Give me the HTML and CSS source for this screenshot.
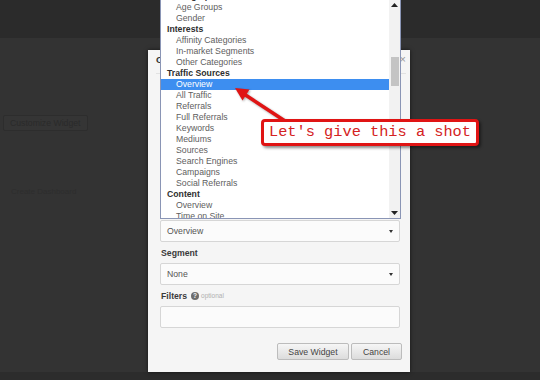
FILE: index.html
```html
<!DOCTYPE html>
<html lang="en">
<head>
    <meta charset="UTF-8">
    <title>Customize Widget</title>
    <link rel="stylesheet" href="styles.css">
</head>
<body>
    <div class="page">
        <div class="topbar"></div>
        <div class="content">
            <div class="ghost-btn">Customize Widget</div>
            <div class="ghost-link">Create Dashboard</div>
        </div>
    </div>

    <div class="modal">
        <div class="modal-head">
            <span class="modal-title">Customize Widget</span>
            <span class="close">&times;</span>
        </div>
        <!-- fields hidden under the open list -->
        <div class="covered"></div>
        <div class="field">
            <div class="control">Overview <span class="caret"></span></div>
        </div>
        <div class="field">
            <div class="label">Segment</div>
            <div class="control">None <span class="caret"></span></div>
        </div>
        <div class="field">
            <div class="label">Filters <span class="help">?</span> <span class="optional">optional</span></div>
            <div class="control"></div>
        </div>
        <div class="actions">
            <button class="btn btn-save">Save Widget</button>
            <button class="btn btn-cancel">Cancel</button>
        </div>
    </div>

    <!-- open report list, popping up above its select -->
    <div class="dropdown">
        <ul class="options">
            <li class="group">Demographics</li>
            <li>Age Groups</li>
            <li>Gender</li>
            <li class="group">Interests</li>
            <li>Affinity Categories</li>
            <li>In-market Segments</li>
            <li>Other Categories</li>
            <li class="group">Traffic Sources</li>
            <li class="selected">Overview</li>
            <li>All Traffic</li>
            <li>Referrals</li>
            <li>Full Referrals</li>
            <li>Keywords</li>
            <li>Mediums</li>
            <li>Sources</li>
            <li>Search Engines</li>
            <li>Campaigns</li>
            <li>Social Referrals</li>
            <li class="group">Content</li>
            <li>Overview</li>
            <li>Time on Site</li>
        </ul>
        <div class="scrollbar">
            <div class="scroll-btn">
                <svg width="7" height="4" viewBox="0 0 7 4"><path d="M0 4 L3.5 0 L7 4 Z" fill="#222"/></svg>
            </div>
            <div class="track"><div class="thumb"></div></div>
            <div class="scroll-btn">
                <svg width="7" height="4" viewBox="0 0 7 4"><path d="M0 0 L3.5 4 L7 0 Z" fill="#222"/></svg>
            </div>
        </div>
    </div>

    <svg class="pointer" width="540" height="380" viewBox="0 0 540 380">
        <line x1="285" y1="121" x2="244" y2="94" stroke="#e01414" stroke-width="3.5" stroke-linecap="round"/>
        <polygon points="235,88 249.5,89.5 242.5,100.5" fill="#e01414"/>
    </svg>
    <div class="callout">Let's give this a shot</div>
</body>
</html>
```

FILE: styles.css
```css
body {
    margin: 0;
    width: 540px;
    height: 380px;
    overflow: hidden;
    background-color: #333;
    font-family: "Liberation Sans", Arial, sans-serif;
    position: relative;
}
.page {
    height: 380px;
    display: flex;
    flex-direction: column;
}
.topbar {
    height: 38px;
    background-color: #2b2b2b;
}
.content {
    flex: 1;
    padding: 74px 0 0 3px;
    border-bottom: 8px solid #2c2c2c;
}
.ghost-btn {
    display: inline-block;
    padding: 2px 6px;
    font-size: 8.7px;
    line-height: 10px;
    color: #2a2a2a;
    background-color: #353535;
    border: 1px solid #2d2d2d;
    border-radius: 2px;
}
.ghost-link {
    margin: 56px 0 0 8px;
    font-size: 8px;
    color: #2d2d2d;
}

/* modal */
.modal {
    position: absolute;
    left: 148px;
    top: 50px;
    width: 240px;
    height: 310px;
    padding: 0 10px 12px 12px;
    background-color: #f5f5f5;
    box-shadow: 0 0 4px rgba(0, 0, 0, 0.6);
    display: flex;
    flex-direction: column;
}
.modal-head {
    height: 19px;
    padding: 4px 0 0 0;
    margin: 0 -6px 0 -4px;
    border-bottom: 1px solid #e2e2e2;
    display: flex;
    justify-content: space-between;
    align-items: flex-start;
}
.modal-title {
    font-size: 9.5px;
    font-weight: bold;
    color: #333;
    line-height: 11px;
}
.close {
    font-size: 11px;
    line-height: 11px;
    color: #999;
}
.covered {
    height: 150px;
}
.label {
    margin: 5px 0 4px 1px;
    height: 12px;
    font-size: 8.7px;
    font-weight: bold;
    line-height: 12px;
    color: #3a3a3a;
    display: flex;
    align-items: center;
    gap: 2px;
}
.help {
    width: 8px;
    height: 8px;
    border-radius: 50%;
    background-color: #6d6d6d;
    color: #f5f5f5;
    font-size: 6.5px;
    line-height: 8px;
    text-align: center;
    margin-left: 2px;
}
.optional {
    font-size: 6.5px;
    font-weight: normal;
    color: #b0b0b0;
}
.control {
    height: 20px;
    padding: 0 6px 0 6px;
    background-color: #fbfbfb;
    border: 1px solid #d6d6d6;
    border-radius: 2px;
    font-size: 8.7px;
    color: #555;
    display: flex;
    justify-content: space-between;
    align-items: center;
}
.caret {
    width: 0;
    height: 0;
    border-left: 2.5px solid transparent;
    border-right: 2.5px solid transparent;
    border-top: 3px solid #333;
}
.actions {
    margin: 15px -2px 0 0;
    display: flex;
    justify-content: flex-end;
    gap: 2px;
}
.btn {
    height: 17px;
    padding: 0;
    font-family: "Liberation Sans", Arial, sans-serif;
    font-size: 8.7px;
    color: #444;
    background: linear-gradient(#f6f6f6, #dcdcdc);
    border: 1px solid #bcbcbc;
    border-radius: 2px;
}
.btn-save { width: 72px; }
.btn-cancel { width: 51px; }

/* open select list */
.dropdown {
    position: absolute;
    left: 160px;
    top: -1px;
    width: 239px;
    height: 218px;
    background-color: #fff;
    border: 1px solid #8a95b5;
    display: flex;
    overflow: hidden;
}
.options {
    flex: 1;
    list-style: none;
    margin: -9px 0 0 0;
    padding: 0;
}
.options li {
    height: 11px;
    line-height: 11px;
    padding-left: 15px;
    font-size: 8.7px;
    color: #606060;
    white-space: nowrap;
}
.options li.group {
    padding-left: 6px;
    font-weight: bold;
    color: #2e2e2e;
}
.options li.selected {
    background-color: #3d8ef0;
    color: #fff;
}
.scrollbar {
    width: 11px;
    background-color: #f2f2f2;
    display: flex;
    flex-direction: column;
}
.scroll-btn {
    height: 10px;
    display: flex;
    align-items: center;
    justify-content: center;
}
.track {
    flex: 1;
    padding: 47px 1px 0 2px;
}
.thumb {
    height: 29px;
    background-color: #c4c4c4;
}

/* annotation */
.pointer {
    position: absolute;
    left: 0;
    top: 0;
    filter: drop-shadow(1px 1px 1px rgba(0, 0, 0, 0.35));
}
.callout {
    position: absolute;
    left: 261px;
    top: 119px;
    width: 212px;
    height: 21px;
    background-color: #fff;
    border: 3px solid #e01414;
    border-radius: 4px;
    box-shadow: 2px 2px 3px rgba(0, 0, 0, 0.45);
    font-family: "Liberation Mono", "Courier New", monospace;
    font-size: 15.3px;
    line-height: 21px;
    color: #d42222;
    text-align: center;
}
```
